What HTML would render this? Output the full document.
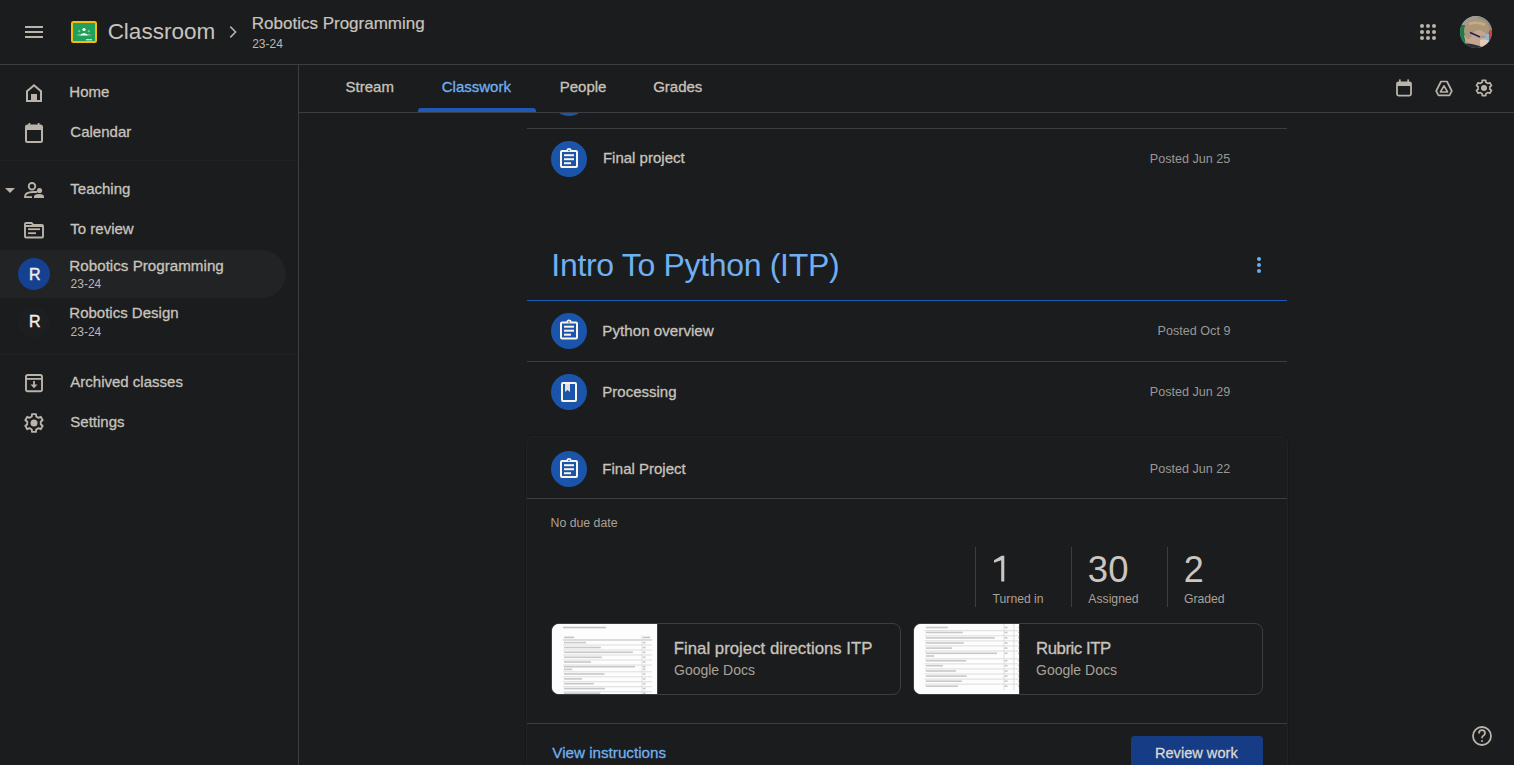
<!DOCTYPE html>
<html><head><meta charset="utf-8">
<style>
*{box-sizing:border-box;margin:0;padding:0}
html,body{width:1514px;height:765px;overflow:hidden;background:#1b1c1e;font-family:"Liberation Sans",sans-serif;color:#c8c3bc}
.a{position:absolute;white-space:nowrap}
.bl{display:inline-block;width:0;height:0;vertical-align:baseline}
.ln{position:absolute;background:#3a3e41}
svg{position:absolute;left:0;top:0;overflow:visible}
</style></head><body>

<div class="ln" style="left:0;top:64px;width:1514px;height:1px"></div>
<div class="ln" style="left:298px;top:65px;width:1px;height:700px"></div>
<div class="a" style="left:0;top:160px;width:298px;height:1px;background:#1f2123"></div>
<div class="a" style="left:0;top:354px;width:298px;height:1px;background:#1f2123"></div>
<div class="a" style="left:-24px;top:250px;width:310px;height:48px;background:#212325;border-radius:24px"></div>
<div class="a" style="left:18px;top:258px;width:32px;height:32px;border-radius:50%;background:#154190"></div>
<div class="a" style="left:18px;top:306px;width:32px;height:32px;border-radius:50%;background:#1d1e20"></div>
<div class="a" style="left:299px;top:113px;width:1215px;height:652px;overflow:hidden">
<div class="a" style="left:252px;top:-33px;width:36px;height:36px;border-radius:50%;background:#1a55ab"></div>
<div class="a" style="left:227px;top:323px;width:762px;height:400px;border:1px solid #202224;border-radius:7px;box-shadow:0 0 2px rgba(0,0,0,.45)"></div>
</div>
<div class="ln" style="left:527px;top:128px;width:760px;height:1px"></div>
<div class="a" style="left:527px;top:300px;width:760px;height:1px;background:#1e5bb4"></div>
<div class="ln" style="left:527px;top:361px;width:760px;height:1px"></div>
<div class="ln" style="left:527px;top:498px;width:760px;height:1px"></div>
<div class="ln" style="left:527px;top:723px;width:760px;height:1px"></div>
<div class="a" style="left:418px;top:108px;width:118px;height:4px;background:#1d59b5;border-radius:3px 3px 0 0"></div>
<div class="ln" style="left:299px;top:112px;width:1215px;height:1px"></div>
<div class="a" style="left:551px;top:141px;width:36px;height:36px;border-radius:50%;background:#1a55ab"></div>
<div class="a" style="left:551px;top:312.5px;width:36px;height:36px;border-radius:50%;background:#1a55ab"></div>
<div class="a" style="left:551px;top:374px;width:36px;height:36px;border-radius:50%;background:#1a55ab"></div>
<div class="a" style="left:551px;top:451px;width:36px;height:36px;border-radius:50%;background:#1a55ab"></div>
<div class="a" style="left:975px;top:547px;width:1px;height:60px;background:#3a3e41"></div>
<div class="a" style="left:1071px;top:547px;width:1px;height:60px;background:#3a3e41"></div>
<div class="a" style="left:1167px;top:547px;width:1px;height:60px;background:#3a3e41"></div>
<div class="a" style="left:551px;top:623px;width:350px;height:72px;border:1px solid #3a3e41;border-radius:8px;overflow:hidden"><div class="a" style="left:0;top:0;width:106px;height:70px;background:#fdfdfd;border-right:1px solid #3a3e41"></div></div>
<div class="a" style="left:913px;top:623px;width:350px;height:72px;border:1px solid #3a3e41;border-radius:8px;overflow:hidden"><div class="a" style="left:0;top:0;width:106px;height:70px;background:#fdfdfd;border-right:1px solid #3a3e41"></div></div>
<div class="a" style="left:1131px;top:736px;width:132px;height:40px;background:#153c85;border-radius:4px"></div>
<svg width="1514" height="765" viewBox="0 0 1514 765"><rect x="25" y="26" width="18" height="2" fill="#b9b3a9"/><rect x="25" y="31" width="18" height="2" fill="#b9b3a9"/><rect x="25" y="36" width="18" height="2" fill="#b9b3a9"/><rect x="71" y="21" width="26" height="22" rx="2.5" fill="#f9bb0b"/><rect x="73" y="23" width="22" height="18" fill="#21a05b"/><circle cx="84" cy="29.5" r="1.6" fill="#fff"/><path d="M79.6 35.5 Q84 31.2 88.4 35.5 Z" fill="#fff"/><circle cx="79.2" cy="31.2" r="1.1" fill="#8fd3a8" opacity=".8"/><circle cx="88.8" cy="31.2" r="1.1" fill="#8fd3a8" opacity=".8"/><path d="M76.3 35.6 Q79 32.8 81 34.2 L81 35.6Z" fill="#8fd3a8" opacity=".7"/><path d="M91.7 35.6 Q89 32.8 87 34.2 L87 35.6Z" fill="#8fd3a8" opacity=".7"/><rect x="86" y="39" width="6" height="1.4" fill="#cfd8cf"/><path d="M230.3 26.6 L235.6 32 L230.3 37.4" fill="none" stroke="#b9b3a9" stroke-width="1.5"/><circle cx="1422" cy="26" r="2" fill="#b9b3a9"/><circle cx="1428" cy="26" r="2" fill="#b9b3a9"/><circle cx="1434" cy="26" r="2" fill="#b9b3a9"/><circle cx="1422" cy="32" r="2" fill="#b9b3a9"/><circle cx="1428" cy="32" r="2" fill="#b9b3a9"/><circle cx="1434" cy="32" r="2" fill="#b9b3a9"/><circle cx="1422" cy="38" r="2" fill="#b9b3a9"/><circle cx="1428" cy="38" r="2" fill="#b9b3a9"/><circle cx="1434" cy="38" r="2" fill="#b9b3a9"/><path d="M27 91.2 L34 85.2 L41 91.2 L41 101 L27 101 Z" fill="none" stroke="#b9b3a9" stroke-width="2" stroke-linejoin="miter"/><rect x="31" y="94" width="6" height="7" fill="#b9b3a9"/><rect x="26" y="125.5" width="16" height="16.5" rx="1.5" fill="none" stroke="#b9b3a9" stroke-width="2"/><rect x="26" y="125.5" width="16" height="4.5" fill="#b9b3a9"/><rect x="28.5" y="123" width="1.8" height="3" fill="#b9b3a9"/><rect x="37.7" y="123" width="1.8" height="3" fill="#b9b3a9"/><path d="M5 188 L15 188 L10 193 Z" fill="#b9b3a9"/><circle cx="32" cy="186.3" r="3.3" fill="none" stroke="#b9b3a9" stroke-width="1.8"/><path d="M25 198 L25 196.5 Q25 192.3 33 192 L37 192" fill="none" stroke="#b9b3a9" stroke-width="1.8"/><rect x="25" y="196.2" width="7" height="1.8" fill="#b9b3a9"/><circle cx="39.5" cy="190.5" r="2.6" fill="#b9b3a9"/><path d="M34 198 L34 196.5 Q34 194 39 194 Q44 194 44 196.5 L44 198 Z" fill="#b9b3a9"/><path d="M25 224 Q25 223 26 223 L31.5 223 L33.5 225 L42 225 Q43 225 43 226 L43 236.5 Q43 237.5 42 237.5 L26 237.5 Q25 237.5 25 236.5 Z" fill="none" stroke="#b9b3a9" stroke-width="1.9"/><rect x="25" y="225" width="18" height="2" fill="#b9b3a9"/><rect x="28" y="228.3" width="12" height="1.8" fill="#b9b3a9"/><rect x="28" y="232.3" width="8" height="1.8" fill="#b9b3a9"/><rect x="26" y="375" width="16" height="16.3" rx="1.8" fill="none" stroke="#b9b3a9" stroke-width="1.9"/><rect x="26" y="378" width="16" height="1.8" fill="#b9b3a9"/><rect x="33.1" y="381" width="1.8" height="5" fill="#b9b3a9"/><path d="M30.5 384.5 L37.5 384.5 L34 388.3 Z" fill="#b9b3a9"/><path d="M31.80,416.46 L32.01,414.12 L35.99,414.12 L36.20,416.46 L38.56,417.82 L40.70,416.84 L42.68,420.28 L40.76,421.64 L40.76,424.36 L42.68,425.72 L40.70,429.16 L38.56,428.18 L36.20,429.54 L35.99,431.88 L32.01,431.88 L31.80,429.54 L29.44,428.18 L27.30,429.16 L25.32,425.72 L27.24,424.36 L27.24,421.64 L25.32,420.28 L27.30,416.84 L29.44,417.82Z" fill="none" stroke="#b9b3a9" stroke-width="1.9" stroke-linejoin="round"/><circle cx="34" cy="423" r="3.5" fill="#b9b3a9"/><rect x="1397" y="82.3" width="14" height="13.3" rx="1.5" fill="none" stroke="#b9b3a9" stroke-width="1.8"/><rect x="1397" y="82.3" width="14" height="3.7" fill="#b9b3a9"/><rect x="1399" y="79.4" width="1.7" height="3" fill="#b9b3a9"/><rect x="1407.3" y="79.4" width="1.7" height="3" fill="#b9b3a9"/><path d="M1441 81.5 L1447 81.5 L1451.8 91 L1449.5 95.3 L1438.5 95.3 L1436.2 91 Z" fill="none" stroke="#b9b3a9" stroke-width="1.7" stroke-linejoin="round"/><path d="M1444 85.8 L1447.6 92 L1440.4 92 Z" fill="none" stroke="#b9b3a9" stroke-width="1.6" stroke-linejoin="round"/><path d="M1482.09,82.31 L1482.28,80.29 L1485.72,80.29 L1485.91,82.31 L1487.97,83.50 L1489.82,82.65 L1491.54,85.64 L1489.88,86.81 L1489.88,89.19 L1491.54,90.36 L1489.82,93.35 L1487.97,92.50 L1485.91,93.69 L1485.72,95.71 L1482.28,95.71 L1482.09,93.69 L1480.03,92.50 L1478.18,93.35 L1476.46,90.36 L1478.12,89.19 L1478.12,86.81 L1476.46,85.64 L1478.18,82.65 L1480.03,83.50Z" fill="none" stroke="#b9b3a9" stroke-width="1.7" stroke-linejoin="round"/><circle cx="1484" cy="88" r="3.0" fill="#b9b3a9"/><path d="M1001.6 555.8 L1004.3 555.8 L1004.3 581.6 L1001.2 581.6 L1001.2 560.2 L994 562.8 L994 560.2 Z" fill="#cbc6bf"/><circle cx="1259" cy="259" r="2" fill="#6cadee"/><circle cx="1259" cy="265" r="2" fill="#6cadee"/><circle cx="1259" cy="271" r="2" fill="#6cadee"/><circle cx="1482" cy="736" r="9" fill="none" stroke="#b9b3a9" stroke-width="1.8"/><path d="M1479 733.5 Q1479 730.2 1482 730.2 Q1485 730.2 1485 733.2 Q1485 735 1483 736 Q1482 736.6 1482 738.2" fill="none" stroke="#b9b3a9" stroke-width="1.8"/><circle cx="1482" cy="741" r="1" fill="#b9b3a9"/><rect x="561" y="151.0" width="16" height="16" rx="1" fill="none" stroke="#fbf3e6" stroke-width="2"/><path d="M566.4 150.6 A2.6 2.6 0 0 1 571.6 150.6 Z" fill="#fbf3e6"/><circle cx="569" cy="150.5" r="0.8" fill="#1a55ab"/><rect x="564" y="154.2" width="10" height="2" fill="#fbf3e6"/><rect x="564" y="158.2" width="10" height="2" fill="#fbf3e6"/><rect x="564" y="162.2" width="7" height="2" fill="#fbf3e6"/><rect x="561" y="322.5" width="16" height="16" rx="1" fill="none" stroke="#fbf3e6" stroke-width="2"/><path d="M566.4 322.1 A2.6 2.6 0 0 1 571.6 322.1 Z" fill="#fbf3e6"/><circle cx="569" cy="322.0" r="0.8" fill="#1a55ab"/><rect x="564" y="325.7" width="10" height="2" fill="#fbf3e6"/><rect x="564" y="329.7" width="10" height="2" fill="#fbf3e6"/><rect x="564" y="333.7" width="7" height="2" fill="#fbf3e6"/><rect x="561" y="461.0" width="16" height="16" rx="1" fill="none" stroke="#fbf3e6" stroke-width="2"/><path d="M566.4 460.6 A2.6 2.6 0 0 1 571.6 460.6 Z" fill="#fbf3e6"/><circle cx="569" cy="460.5" r="0.8" fill="#1a55ab"/><rect x="564" y="464.2" width="10" height="2" fill="#fbf3e6"/><rect x="564" y="468.2" width="10" height="2" fill="#fbf3e6"/><rect x="564" y="472.2" width="7" height="2" fill="#fbf3e6"/><rect x="562" y="383" width="14" height="18" rx="1" fill="none" stroke="#fbf3e6" stroke-width="2"/><path d="M565 384 L570 384 L570 392 L567.5 390 L565 392 Z" fill="#e2e0dd"/></svg>
<div class="a" style="left:1460px;top:16px;width:32px;height:32px;border-radius:50%;overflow:hidden;background:#9a9892"><svg width="32" height="32" viewBox="0 0 32 32"><defs><filter id="bl" x="-20%" y="-20%" width="140%" height="140%"><feGaussianBlur stdDeviation="0.7"/></filter></defs><g filter="url(#bl)"><rect x="0" y="0" width="32" height="32" fill="#9e9c96"/><rect x="18" y="0" width="14" height="14" fill="#8f8f8a"/><rect x="-1" y="9" width="6" height="18" fill="#1f7a4e"/><rect x="28.5" y="14" width="5" height="11" fill="#c2473a"/><rect x="24" y="18" width="5" height="7" fill="#93b4d4"/><path d="M4 20 Q6 30 16 31 Q24 30 26 20 L24 13 L10 13 Z" fill="#c4a58e"/><path d="M20 24 Q26 22 30 26 L28 32 L20 32 Z" fill="#e2cbbb"/><path d="M2 28 Q10 26 22 31 L22 34 L0 34 Z" fill="#2b2d36"/><path d="M4 16 Q4 3 16 2.5 Q29 3 29.5 15 Q27 18 22 15 Q17 12 13 17 Q10 24 7.5 23 Q5 21 4 16 Z" fill="#ad9676"/><path d="M9 8 Q16 5 25 9" stroke="#c2ad8a" stroke-width="2.5" fill="none"/><path d="M10 16.5 L20 21" stroke="#1b1f5c" stroke-width="1.4"/><path d="M20 21 L25 20.5" stroke="#8a8aa0" stroke-width="1"/></g></svg></div>
<div class="a" style="left:552px;top:624px;width:105px;height:70px;overflow:hidden;border-radius:7px 0 0 7px;background:#fdfdfd"><svg width="105" height="70"><rect x="11.00" y="2.70" width="43.00" height="1.60" fill="#c0c0c0"/><rect x="12.00" y="12.60" width="10.00" height="1.60" fill="#c4c4c4"/><rect x="91.00" y="12.60" width="7.00" height="1.60" fill="#c4c4c4"/><rect x="11.00" y="15.00" width="89.00" height="2.00" fill="#dcdcdc"/><rect x="11.00" y="20.50" width="89.00" height="1.00" fill="#dddddd"/><rect x="11.00" y="25.50" width="89.00" height="1.00" fill="#dddddd"/><rect x="11.00" y="30.50" width="89.00" height="1.00" fill="#dddddd"/><rect x="11.00" y="35.50" width="89.00" height="1.00" fill="#dddddd"/><rect x="11.00" y="40.50" width="89.00" height="1.00" fill="#dddddd"/><rect x="11.00" y="47.30" width="89.00" height="1.00" fill="#dddddd"/><rect x="11.00" y="52.30" width="89.00" height="1.00" fill="#dddddd"/><rect x="11.00" y="57.20" width="89.00" height="1.00" fill="#dddddd"/><rect x="11.00" y="62.20" width="89.00" height="1.00" fill="#dddddd"/><rect x="11.00" y="67.20" width="89.00" height="1.00" fill="#dddddd"/><rect x="12.00" y="17.80" width="22.00" height="1.60" fill="#c8c8c8"/><rect x="91.00" y="17.80" width="2.50" height="1.60" fill="#c8c8c8"/><rect x="12.00" y="22.70" width="36.90" height="1.60" fill="#c8c8c8"/><rect x="91.00" y="22.70" width="2.50" height="1.60" fill="#c8c8c8"/><rect x="12.00" y="27.50" width="68.90" height="1.60" fill="#c8c8c8"/><rect x="91.00" y="27.50" width="2.50" height="1.60" fill="#c8c8c8"/><rect x="12.00" y="32.50" width="37.80" height="1.60" fill="#c8c8c8"/><rect x="91.00" y="32.50" width="2.50" height="1.60" fill="#c8c8c8"/><rect x="12.00" y="37.20" width="27.00" height="1.60" fill="#c8c8c8"/><rect x="91.00" y="37.20" width="2.50" height="1.60" fill="#c8c8c8"/><rect x="12.00" y="41.90" width="71.00" height="1.60" fill="#c8c8c8"/><rect x="91.00" y="41.90" width="2.50" height="1.60" fill="#c8c8c8"/><rect x="12.00" y="44.60" width="8.30" height="1.60" fill="#c8c8c8"/><rect x="91.00" y="44.60" width="2.50" height="1.60" fill="#c8c8c8"/><rect x="12.00" y="49.20" width="40.50" height="1.60" fill="#c8c8c8"/><rect x="91.00" y="49.20" width="2.50" height="1.60" fill="#c8c8c8"/><rect x="12.00" y="54.10" width="18.00" height="1.60" fill="#c8c8c8"/><rect x="91.00" y="54.10" width="2.50" height="1.60" fill="#c8c8c8"/><rect x="12.00" y="58.90" width="29.80" height="1.60" fill="#c8c8c8"/><rect x="91.00" y="58.90" width="2.50" height="1.60" fill="#c8c8c8"/><rect x="12.00" y="63.80" width="41.00" height="1.60" fill="#c8c8c8"/><rect x="91.00" y="63.80" width="2.50" height="1.60" fill="#c8c8c8"/><rect x="12.00" y="68.50" width="36.20" height="1.60" fill="#c8c8c8"/><rect x="91.00" y="68.50" width="2.50" height="1.60" fill="#c8c8c8"/><rect x="89.50" y="11.00" width="1.00" height="60.00" fill="#dddddd"/></svg></div>
<div class="a" style="left:914px;top:624px;width:105px;height:70px;overflow:hidden;border-radius:7px 0 0 7px;background:#fdfdfd"><svg width="105" height="70"><rect x="10.60" y="6.20" width="95.00" height="1.00" fill="#dddddd"/><rect x="10.60" y="11.30" width="95.00" height="1.00" fill="#dddddd"/><rect x="10.60" y="16.40" width="95.00" height="1.00" fill="#dddddd"/><rect x="10.60" y="21.40" width="95.00" height="1.00" fill="#dddddd"/><rect x="10.60" y="26.50" width="95.00" height="1.00" fill="#dddddd"/><rect x="10.60" y="34.30" width="95.00" height="1.00" fill="#dddddd"/><rect x="10.60" y="39.40" width="95.00" height="1.00" fill="#dddddd"/><rect x="10.60" y="44.40" width="95.00" height="1.00" fill="#dddddd"/><rect x="10.60" y="49.50" width="95.00" height="1.00" fill="#dddddd"/><rect x="10.60" y="54.60" width="95.00" height="1.00" fill="#dddddd"/><rect x="10.60" y="59.60" width="95.00" height="1.00" fill="#dddddd"/><rect x="11.80" y="2.70" width="22.00" height="1.60" fill="#c8c8c8"/><rect x="11.80" y="7.70" width="37.00" height="1.60" fill="#c8c8c8"/><rect x="11.80" y="13.10" width="69.00" height="1.60" fill="#c8c8c8"/><rect x="11.80" y="18.20" width="38.00" height="1.60" fill="#c8c8c8"/><rect x="11.80" y="23.30" width="26.10" height="1.60" fill="#c8c8c8"/><rect x="11.80" y="28.50" width="71.20" height="1.60" fill="#c8c8c8"/><rect x="11.80" y="31.20" width="8.50" height="1.60" fill="#c8c8c8"/><rect x="11.80" y="35.90" width="40.40" height="1.60" fill="#c8c8c8"/><rect x="11.80" y="40.90" width="17.20" height="1.60" fill="#c8c8c8"/><rect x="11.80" y="46.20" width="30.20" height="1.60" fill="#c8c8c8"/><rect x="11.80" y="51.30" width="40.90" height="1.60" fill="#c8c8c8"/><rect x="11.80" y="56.40" width="36.10" height="1.60" fill="#c8c8c8"/><rect x="11.80" y="61.40" width="32.20" height="1.60" fill="#c8c8c8"/><rect x="90.50" y="2.70" width="3.00" height="1.60" fill="#c8c8c8"/><rect x="104.00" y="2.70" width="1.00" height="1.60" fill="#c8c8c8"/><rect x="90.50" y="7.70" width="3.00" height="1.60" fill="#c8c8c8"/><rect x="104.00" y="7.70" width="1.00" height="1.60" fill="#c8c8c8"/><rect x="90.50" y="13.10" width="3.00" height="1.60" fill="#c8c8c8"/><rect x="104.00" y="13.10" width="1.00" height="1.60" fill="#c8c8c8"/><rect x="90.50" y="18.20" width="3.00" height="1.60" fill="#c8c8c8"/><rect x="104.00" y="18.20" width="1.00" height="1.60" fill="#c8c8c8"/><rect x="90.50" y="23.30" width="3.00" height="1.60" fill="#c8c8c8"/><rect x="104.00" y="23.30" width="1.00" height="1.60" fill="#c8c8c8"/><rect x="90.50" y="28.50" width="3.00" height="1.60" fill="#c8c8c8"/><rect x="104.00" y="28.50" width="1.00" height="1.60" fill="#c8c8c8"/><rect x="90.50" y="35.90" width="3.00" height="1.60" fill="#c8c8c8"/><rect x="104.00" y="35.90" width="1.00" height="1.60" fill="#c8c8c8"/><rect x="90.50" y="40.90" width="3.00" height="1.60" fill="#c8c8c8"/><rect x="104.00" y="40.90" width="1.00" height="1.60" fill="#c8c8c8"/><rect x="90.50" y="46.20" width="3.00" height="1.60" fill="#c8c8c8"/><rect x="104.00" y="46.20" width="1.00" height="1.60" fill="#c8c8c8"/><rect x="90.50" y="51.30" width="3.00" height="1.60" fill="#c8c8c8"/><rect x="104.00" y="51.30" width="1.00" height="1.60" fill="#c8c8c8"/><rect x="90.50" y="56.40" width="3.00" height="1.60" fill="#c8c8c8"/><rect x="104.00" y="56.40" width="1.00" height="1.60" fill="#c8c8c8"/><rect x="90.50" y="61.40" width="3.00" height="1.60" fill="#c8c8c8"/><rect x="104.00" y="61.40" width="1.00" height="1.60" fill="#c8c8c8"/><rect x="89.50" y="0.00" width="1.00" height="66.00" fill="#dddddd"/><rect x="99.40" y="0.00" width="1.00" height="66.00" fill="#dddddd"/></svg></div>
<div class="a" id="classroom" style="top:21.00px;font-size:22.5px;line-height:22.5px;color:#c8c3bc;left:107.63px;">Classroom<i class="bl"></i></div>
<div class="a" id="htitle" style="top:14.72px;font-size:17px;line-height:17px;color:#c8c3bc;-webkit-text-stroke:0.2px #c8c3bc;left:251.81px;">Robotics Programming<i class="bl"></i></div>
<div class="a" id="hsub" style="top:37.91px;font-size:12px;line-height:12px;color:#bcb7af;left:252.16px;">23-24<i class="bl"></i></div>
<div class="a" id="home" style="top:84.21px;font-size:15px;line-height:15px;color:#c8c3bc;-webkit-text-stroke:0.3px #c8c3bc;left:69.35px;">Home<i class="bl"></i></div>
<div class="a" id="cal" style="top:124.21px;font-size:15px;line-height:15px;color:#c8c3bc;-webkit-text-stroke:0.3px #c8c3bc;left:70.35px;">Calendar<i class="bl"></i></div>
<div class="a" id="teach" style="top:181.31px;font-size:15px;line-height:15px;color:#c8c3bc;-webkit-text-stroke:0.3px #c8c3bc;left:70.35px;">Teaching<i class="bl"></i></div>
<div class="a" id="review" style="top:221.31px;font-size:15px;line-height:15px;color:#c8c3bc;-webkit-text-stroke:0.3px #c8c3bc;left:70.35px;">To review<i class="bl"></i></div>
<div class="a" id="rp" style="top:257.71px;font-size:15.2px;line-height:15.2px;color:#c8c3bc;-webkit-text-stroke:0.3px #c8c3bc;left:69.34px;">Robotics Programming<i class="bl"></i></div>
<div class="a" id="rps" style="top:278.01px;font-size:12px;line-height:12px;color:#bcb7af;left:70.56px;">23-24<i class="bl"></i></div>
<div class="a" id="rd" style="top:305.31px;font-size:15px;line-height:15px;color:#c8c3bc;-webkit-text-stroke:0.3px #c8c3bc;left:69.35px;">Robotics Design<i class="bl"></i></div>
<div class="a" id="rds" style="top:326.01px;font-size:12px;line-height:12px;color:#bcb7af;left:70.56px;">23-24<i class="bl"></i></div>
<div class="a" id="arch" style="top:373.91px;font-size:15px;line-height:15px;color:#c8c3bc;-webkit-text-stroke:0.3px #c8c3bc;left:70.35px;">Archived classes<i class="bl"></i></div>
<div class="a" id="sett" style="top:413.61px;font-size:15px;line-height:15px;color:#c8c3bc;-webkit-text-stroke:0.3px #c8c3bc;left:70.35px;">Settings<i class="bl"></i></div>
<div class="a" id="av1" style="top:266.50px;font-size:16px;line-height:16px;color:#f3efe8;-webkit-text-stroke:0.45px #f3efe8;left:28.88px;">R<i class="bl"></i></div>
<div class="a" id="av2" style="top:314.30px;font-size:16px;line-height:16px;color:#f3efe8;-webkit-text-stroke:0.45px #f3efe8;left:28.88px;">R<i class="bl"></i></div>
<div class="a" id="t1" style="top:78.81px;font-size:15px;line-height:15px;color:#c8c3bc;-webkit-text-stroke:0.3px #c8c3bc;left:345.55px;">Stream<i class="bl"></i></div>
<div class="a" id="t2" style="top:78.81px;font-size:15px;line-height:15px;color:#70b0f0;-webkit-text-stroke:0.3px #70b0f0;left:441.75px;">Classwork<i class="bl"></i></div>
<div class="a" id="t3" style="top:78.81px;font-size:15px;line-height:15px;color:#c8c3bc;-webkit-text-stroke:0.3px #c8c3bc;left:559.75px;">People<i class="bl"></i></div>
<div class="a" id="t4" style="top:78.81px;font-size:15px;line-height:15px;color:#c8c3bc;-webkit-text-stroke:0.3px #c8c3bc;left:653.15px;">Grades<i class="bl"></i></div>
<div class="a" id="r1" style="top:150.11px;font-size:15px;line-height:15px;color:#c8c3bc;-webkit-text-stroke:0.3px #c8c3bc;left:602.95px;">Final project<i class="bl"></i></div>
<div class="a" id="d1" style="top:153.01px;font-size:12.6px;line-height:12.6px;color:#999897;right:283.62px;">Posted Jun 25<i class="bl"></i></div>
<div class="a" id="h" style="top:249.01px;font-size:32px;line-height:32px;color:#70b0f0;letter-spacing:-0.32px;left:551.36px;">Intro To Python (ITP)<i class="bl"></i></div>
<div class="a" id="r2" style="top:322.61px;font-size:15.2px;line-height:15.2px;color:#c8c3bc;-webkit-text-stroke:0.3px #c8c3bc;left:602.34px;">Python overview<i class="bl"></i></div>
<div class="a" id="d2" style="top:325.01px;font-size:12.6px;line-height:12.6px;color:#999897;right:283.62px;">Posted Oct 9<i class="bl"></i></div>
<div class="a" id="r3" style="top:383.81px;font-size:15px;line-height:15px;color:#c8c3bc;-webkit-text-stroke:0.3px #c8c3bc;left:602.35px;">Processing<i class="bl"></i></div>
<div class="a" id="d3" style="top:386.11px;font-size:12.6px;line-height:12.6px;color:#999897;right:283.62px;">Posted Jun 29<i class="bl"></i></div>
<div class="a" id="r4" style="top:460.71px;font-size:15px;line-height:15px;color:#c8c3bc;-webkit-text-stroke:0.3px #c8c3bc;left:602.35px;">Final Project<i class="bl"></i></div>
<div class="a" id="d4" style="top:463.21px;font-size:12.6px;line-height:12.6px;color:#999897;right:283.62px;">Posted Jun 22<i class="bl"></i></div>
<div class="a" id="nodue" style="top:517.01px;font-size:12.3px;line-height:12.3px;color:#a8a299;left:550.54px;">No due date<i class="bl"></i></div>
<div class="a" id="n2" style="top:551.61px;font-size:36.5px;line-height:36.5px;color:#cbc6bf;left:1087.85px;">30<i class="bl"></i></div>
<div class="a" id="n3" style="top:551.61px;font-size:36px;line-height:36px;color:#cbc6bf;left:1183.68px;">2<i class="bl"></i></div>
<div class="a" id="l1" style="top:592.90px;font-size:12.2px;line-height:12.2px;color:#a8a299;left:992.55px;">Turned in<i class="bl"></i></div>
<div class="a" id="l2" style="top:592.90px;font-size:12.2px;line-height:12.2px;color:#a8a299;left:1088.35px;">Assigned<i class="bl"></i></div>
<div class="a" id="l3" style="top:592.90px;font-size:12.2px;line-height:12.2px;color:#a8a299;left:1183.95px;">Graded<i class="bl"></i></div>
<div class="a" id="m1" style="top:641.41px;font-size:16.8px;line-height:16.8px;color:#c8c3bc;-webkit-text-stroke:0.3px #c8c3bc;left:673.82px;">Final project directions ITP<i class="bl"></i></div>
<div class="a" id="m1s" style="top:663.41px;font-size:14px;line-height:14px;color:#a8a299;left:674.02px;">Google Docs<i class="bl"></i></div>
<div class="a" id="m2" style="top:641.41px;font-size:16.8px;line-height:16.8px;color:#c8c3bc;-webkit-text-stroke:0.3px #c8c3bc;letter-spacing:-0.45px;left:1036.02px;">Rubric ITP<i class="bl"></i></div>
<div class="a" id="m2s" style="top:663.41px;font-size:14px;line-height:14px;color:#a8a299;left:1036.02px;">Google Docs<i class="bl"></i></div>
<div class="a" id="vi" style="top:744.91px;font-size:15.2px;line-height:15.2px;color:#70b0f0;-webkit-text-stroke:0.3px #70b0f0;left:552.34px;">View instructions<i class="bl"></i></div>
<div class="a" id="rw" style="top:746.22px;font-size:14.6px;line-height:14.6px;color:#dcd8d2;-webkit-text-stroke:0.3px #dcd8d2;left:1154.98px;">Review work<i class="bl"></i></div>
</body></html>
